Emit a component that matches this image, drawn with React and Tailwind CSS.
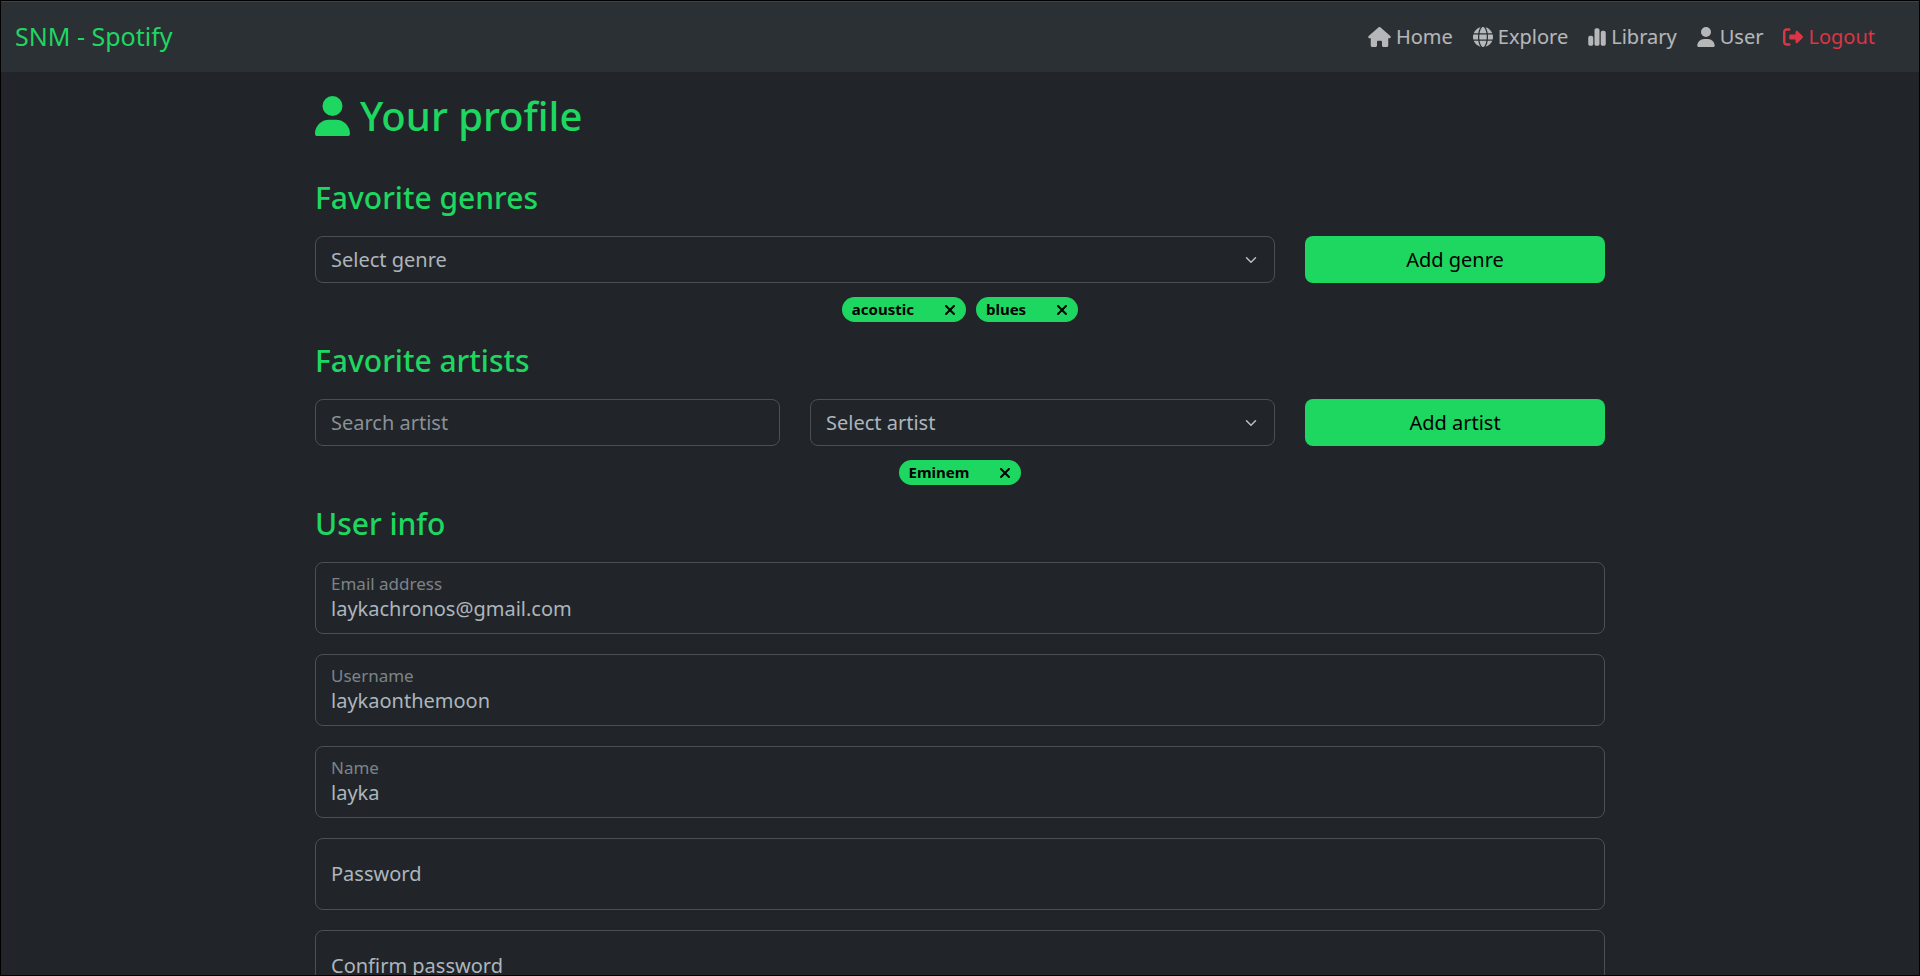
import { useState } from "react";
import {
  FaHouse,
  FaGlobe,
  FaChartSimple,
  FaUser,
  FaRightFromBracket,
  FaXmark,
} from "react-icons/fa6";

const NAV_LINKS = [
  { label: "Home", icon: FaHouse, size: "w-[23px]", tone: "text-white/65" },
  { label: "Explore", icon: FaGlobe, size: "w-5", tone: "text-white/65" },
  { label: "Library", icon: FaChartSimple, size: "w-[18px]", tone: "text-white/65" },
  { label: "User", icon: FaUser, size: "w-[18px]", tone: "text-white/65" },
  { label: "Logout", icon: FaRightFromBracket, size: "w-5", tone: "text-[#dc3545]" },
];

const FIELDS = [
  { id: "email", label: "Email address", type: "email", value: "laykachronos@gmail.com" },
  { id: "username", label: "Username", type: "text", value: "laykaonthemoon" },
  { id: "name", label: "Name", type: "text", value: "layka" },
  { id: "password", label: "Password", type: "password", value: "" },
  { id: "confirm", label: "Confirm password", type: "password", value: "" },
];

function Navbar() {
  return (
    <nav className="flex h-[71px] shrink-0 items-center justify-between border-t border-[#433e4f] bg-[#2b3035] pr-11 pl-[14px]">
      <a href="#" className="pb-[2px] text-[25px] leading-[38px] text-[#1ed760]">
        SNM - Spotify
      </a>
      <ul className="flex gap-5">
        {NAV_LINKS.map(({ label, icon: Icon, size, tone }) => (
          <li key={label}>
            <a href="#" className={`flex items-center gap-[5px] leading-[30px] ${tone}`}>
              <Icon className={`h-5 ${size}`} aria-hidden="true" />
              {label}
            </a>
          </li>
        ))}
      </ul>
    </nav>
  );
}

function Select({ label }) {
  return (
    <div className="relative">
      <select
        aria-label={label}
        className="h-[47px] w-full appearance-none rounded-lg border border-[#495057] bg-[#212529] px-[15px] leading-[30px] text-[#adb5bd]"
      >
        <option>{label}</option>
      </select>
      <svg
        viewBox="0 0 16 16"
        className="pointer-events-none absolute top-[18px] right-4 h-3 w-4"
        fill="none"
        stroke="#b9bfc5"
        strokeWidth="2"
        strokeLinecap="round"
        strokeLinejoin="round"
        aria-hidden="true"
      >
        <path d="m2 5 6 6 6-6" />
      </svg>
    </div>
  );
}

function AddButton({ children }) {
  return (
    <button type="button" className="h-[47px] rounded-lg bg-[#1ed760] leading-[30px] text-black">
      {children}
    </button>
  );
}

function Tags({ items, onRemove }) {
  return (
    <ul className="mt-[14px] mb-[21px] flex min-h-[25px] flex-wrap justify-center gap-[10px]">
      {items.map((item) => (
        <li
          key={item}
          className="flex h-[25px] items-center rounded-full bg-[#1ed760] px-[10px] text-[15px] leading-[15px] font-bold text-black"
        >
          {item}
          <button
            type="button"
            aria-label={`Remove ${item}`}
            className="ml-[30px]"
            onClick={() => onRemove(item)}
          >
            <FaXmark className="h-4 w-3" aria-hidden="true" />
          </button>
        </li>
      ))}
    </ul>
  );
}

function SectionTitle({ children }) {
  return <h2 className="mb-5 text-[30px] leading-9 font-medium text-[#1ed760]">{children}</h2>;
}

function Field({ id, label, type, value: initial }) {
  const [value, setValue] = useState(initial);
  const labelStyle = value
    ? "self-start pt-[9px] text-[17px] leading-[23px] opacity-65"
    : "self-center text-[20px] leading-[30px]";
  return (
    <div className="grid h-[72px] rounded-lg border border-[#495057] text-[#adb5bd]">
      <label htmlFor={id} className={`pointer-events-none col-start-1 row-start-1 px-[15px] ${labelStyle}`}>
        {label}
      </label>
      <input
        id={id}
        type={type}
        value={value}
        onChange={(event) => setValue(event.target.value)}
        className="col-start-1 row-start-1 w-full bg-transparent px-[15px] pt-[23px] pb-[1px] leading-[30px] outline-none"
      />
    </div>
  );
}

export default function App() {
  const [genres, setGenres] = useState(["acoustic", "blues"]);
  const [artists, setArtists] = useState(["Eminem"]);

  return (
    <div className="flex h-screen flex-col border border-black bg-[#212529] font-['Noto_Sans',sans-serif] text-[20px]">
      <Navbar />
      <main className="min-h-0 flex-1 overflow-y-auto [scrollbar-width:none]">
        <form className="mx-auto max-w-[1320px] px-[15px] pt-5 pb-10">
          <h1 className="mb-10 flex items-center gap-[10px] text-[40px] leading-12 font-medium text-[#1ed760]">
            <FaUser className="h-10 w-[35px]" aria-hidden="true" />
            Your profile
          </h1>

          <SectionTitle>Favorite genres</SectionTitle>
          <div className="grid grid-cols-[1fr_300px] gap-[30px]">
            <Select label="Select genre" />
            <AddButton>Add genre</AddButton>
          </div>
          <Tags items={genres} onRemove={(g) => setGenres(genres.filter((x) => x !== g))} />

          <SectionTitle>Favorite artists</SectionTitle>
          <div className="grid grid-cols-[1fr_1fr_300px] gap-[30px]">
            <input
              type="search"
              aria-label="Search artist"
              placeholder="Search artist"
              className="h-[47px] min-w-0 rounded-lg border border-[#495057] bg-[#212529] px-[15px] leading-[30px] text-[#adb5bd] placeholder:text-[#adb5bd]/75"
            />
            <Select label="Select artist" />
            <AddButton>Add artist</AddButton>
          </div>
          <Tags items={artists} onRemove={(a) => setArtists(artists.filter((x) => x !== a))} />

          <SectionTitle>User info</SectionTitle>
          <div className="flex flex-col gap-5">
            {FIELDS.map((field) => (
              <Field key={field.id} {...field} />
            ))}
          </div>
        </form>
      </main>
    </div>
  );
}
